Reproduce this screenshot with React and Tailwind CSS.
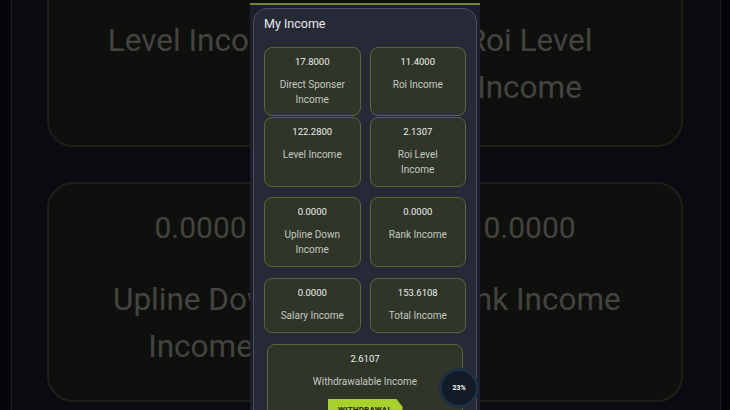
const font = { fontFamily: "Roboto, 'Noto Sans', sans-serif" };

function BigCard({ value, lines, className }) {
  return (
    <div
      className={`w-[307px] shrink-0 rounded-[26px] border-2 border-[#1d1f17] bg-[#0f100e] pt-[21px] text-center text-[#434440] ${className}`}
    >
      <div className="text-[30px] leading-[45px]">{value}</div>
      <div className="mt-[26px] text-[31.5px] leading-[47px]">
        {lines.map((l) => (
          <div key={l}>{l}</div>
        ))}
      </div>
    </div>
  );
}

function Card({ value, lines, className }) {
  return (
    <div
      className={`rounded-[8px] border border-[#5b6735] bg-[#2f3529] pt-[7px] text-center ${className}`}
    >
      <div className="text-[9.5px] leading-[14px] text-[#eeeeea]">{value}</div>
      <div className="mt-[8px] text-[10px] leading-[15px] text-[#c6c8c0]">
        {lines.map((l) => (
          <div key={l}>{l}</div>
        ))}
      </div>
    </div>
  );
}

export default function App() {
  return (
    <div
      className="flex h-[410px] w-[730px] overflow-hidden bg-[#0a0b10]"
      style={font}
    >
      {/* left blurred backdrop */}
      <div className="flex h-full w-[250px] shrink-0 overflow-hidden bg-[#0a0b10]">
        <div className="w-[11px] shrink-0 bg-[#04050a]" />
        <div className="w-[1px] shrink-0 bg-[#1b1d25]" />
        <div className="flex shrink-0 flex-col pl-[35px]">
          <BigCard className="mt-[-77px] h-[224px]" value="122.2800" lines={["Level Income"]} />
          <BigCard className="mt-[35px] h-[220px]" value="0.0000" lines={["Upline Down", "Income"]} />
        </div>
      </div>

      {/* phone */}
      <div className="relative flex h-full w-[230px] shrink-0 flex-col bg-[#1c1f2b]">
        <div className="h-[3px] shrink-0 bg-[#0c0d12]" />
        <div className="h-[2px] shrink-0 bg-[#76833a]" />
        <div className="mx-[3px] mt-[3px] rounded-[14px] border border-[#4a5064] bg-[#262a36] px-[10px] pt-[7px]">
          <div className="text-[12.5px] leading-[16px] text-[#e6e7ea]">My Income</div>

          <div className="mt-[15px] grid grid-cols-2 gap-x-[9px]">
            <Card className="h-[69px]" value="17.8000" lines={["Direct Sponser", "Income"]} />
            <Card className="h-[69px]" value="11.4000" lines={["Roi Income"]} />
          </div>
          <div className="mt-[1px] grid grid-cols-2 gap-x-[9px]">
            <Card className="h-[70px]" value="122.2800" lines={["Level Income"]} />
            <Card className="h-[70px]" value="2.1307" lines={["Roi Level", "Income"]} />
          </div>
          <div className="mt-[10px] grid grid-cols-2 gap-x-[9px]">
            <Card className="h-[70px]" value="0.0000" lines={["Upline Down", "Income"]} />
            <Card className="h-[70px]" value="0.0000" lines={["Rank Income"]} />
          </div>
          <div className="mt-[11px] grid grid-cols-2 gap-x-[9px]">
            <Card className="h-[55px]" value="0.0000" lines={["Salary Income"]} />
            <Card className="h-[55px]" value="153.6108" lines={["Total Income"]} />
          </div>

          <div className="mx-[3px] mt-[11px] rounded-[8px] border border-[#5b6735] bg-[#2f3529] pb-[12px] pt-[7px] text-center">
            <div className="text-[9.5px] leading-[14px] text-[#eeeeea]">2.6107</div>
            <div className="mt-[8px] text-[10px] leading-[15px] text-[#c6c8c0]">
              Withdrawalable Income
            </div>
            <div className="mt-[10px] flex justify-center">
              <div className="flex h-[22px] w-[75px] items-center justify-center bg-[#a9d12c] text-[8px] font-bold tracking-wide text-[#1b2010] [clip-path:polygon(0_0,92%_0,100%_35%,100%_100%,0_100%)]">
                WITHDRAWAL
              </div>
            </div>
          </div>
        </div>

        <div className="absolute left-[189px] top-[368px] flex h-[40px] w-[40px] items-center justify-center rounded-full border-[3px] border-[#1f3042] bg-[#111c28] text-[7px] font-bold text-white">
          23%
        </div>
      </div>

      {/* right blurred backdrop */}
      <div className="flex h-full w-[250px] shrink-0 overflow-hidden bg-[#0a0b10]">
        <div className="flex w-[240px] shrink-0 overflow-hidden">
          <div className="ml-[-104px] flex shrink-0 flex-col">
            <BigCard className="mt-[-77px] h-[224px]" value="2.1307" lines={["Roi Level", "Income"]} />
            <BigCard className="mt-[35px] h-[220px]" value="0.0000" lines={["Rank Income"]} />
          </div>
        </div>
        <div className="w-[1px] shrink-0 bg-[#1b1d25]" />
        <div className="w-[9px] shrink-0 bg-[#04050a]" />
      </div>
    </div>
  );
}
